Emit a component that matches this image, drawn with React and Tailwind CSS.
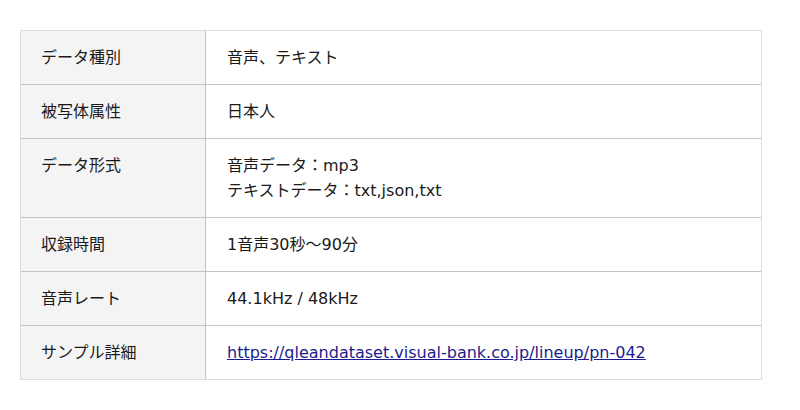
const rows = [
  { label: 'データ種別', value: ['音声、テキスト'] },
  { label: '被写体属性', value: ['日本人'] },
  { label: 'データ形式', value: ['音声データ：mp3', 'テキストデータ：txt,json,txt'] },
  { label: '収録時間', value: ['1音声30秒〜90分'] },
  { label: '音声レート', value: ['44.1kHz / 48kHz'] },
  { label: 'サンプル詳細', link: 'https://qleandataset.visual-bank.co.jp/lineup/pn-042' },
]

export default function App() {
  return (
    <div
      className="w-[800px] h-[410px] bg-white pt-[30px] pl-5 text-[16px] leading-[25px] text-[#1a1a1a]"
      style={{ fontFamily: '"DejaVu Sans", "Noto Sans CJK JP", sans-serif' }}
    >
      <div className="w-[742px] border border-[#dcdcdc]">
        {rows.map((row, i) => (
          <div
            key={row.label}
            className={`flex ${i < rows.length - 1 ? 'border-b border-[#c4c4c4]' : ''}`}
          >
            <div className="w-[185px] shrink-0 bg-[#f4f4f4] border-r border-[#c4c4c4] px-5 py-[14px]">
              {row.label}
            </div>
            <div className="flex-1 pl-[21px] pr-5 py-[14px]">
              {row.link ? (
                <a href={row.link} className="text-[#1c1c8e] underline">
                  {row.link}
                </a>
              ) : (
                row.value.map(v => <div key={v}>{v}</div>)
              )}
            </div>
          </div>
        ))}
      </div>
    </div>
  )
}
